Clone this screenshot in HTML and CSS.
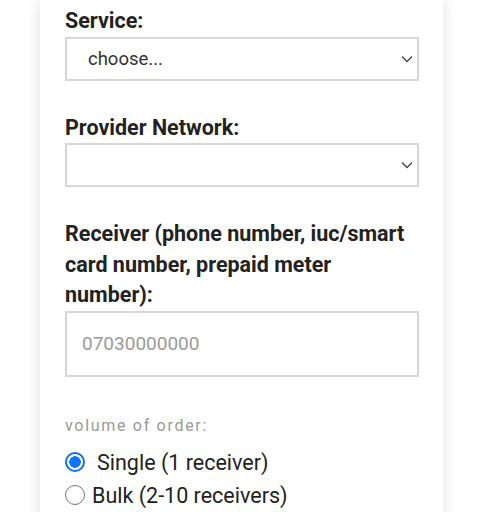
FILE: index.html
```html
<!DOCTYPE html>
<html>
<head>
<meta charset="utf-8">
<link rel="stylesheet" href="styles.css">
</head>
<body>
<div class="page">
  <form class="card">
    <div class="field">
      <label class="label">Service:</label>
      <div class="select-wrap">
        <div class="select">choose...</div>
        <svg class="chev" width="12" height="8" viewBox="0 0 12 8"><path d="M1 1.5 L6 6.5 L11 1.5" fill="none" stroke="#444" stroke-width="1.3"/></svg>
      </div>
    </div>
    <div class="field">
      <label class="label">Provider Network:</label>
      <div class="select-wrap">
        <div class="select"></div>
        <svg class="chev" width="12" height="8" viewBox="0 0 12 8"><path d="M1 1.5 L6 6.5 L11 1.5" fill="none" stroke="#444" stroke-width="1.3"/></svg>
      </div>
    </div>
    <div class="field">
      <label class="label">Receiver (phone number, iuc/smart card number, prepaid meter number):</label>
      <div class="input"><span class="ph">07030000000</span></div>
    </div>
    <div class="volume">volume of order:</div>
    <div class="radios">
      <div class="radio-row single"><span class="radio on"></span><span>Single (1 receiver)</span></div>
      <div class="radio-row bulk"><span class="radio"></span><span>Bulk (2-10 receivers)</span></div>
    </div>
  </form>
</div>
</body>
</html>
```
FILE: styles.css
```css
html, body {
  margin: 0;
  padding: 0;
  background: #ffffff;
}
body {
  font-family: Roboto, "Noto Sans", sans-serif;
  color: #222222;
  overflow: hidden;
}
.page {
  height: 512px;
  overflow: hidden;
}
.card {
  display: block;
  margin-left: 40px;
  width: 403px;
  box-sizing: border-box;
  min-height: 560px;
  background: #ffffff;
  box-shadow: 0 0 14px rgba(0, 0, 0, 0.13);
  padding: 6px 24px 0 25px;
}
.field {
  margin-bottom: 32px;
}
.label {
  display: block;
  font-size: 21.5px;
  font-weight: 700;
  line-height: 30.5px;
  color: #222222;
}
.select-wrap {
  position: relative;
}
.select {
  height: 44px;
  box-sizing: border-box;
  border: 2px solid #d6d6d6;
  padding-left: 21px;
  font-size: 18.5px;
  line-height: 40px;
  color: #333333;
}
.chev {
  position: absolute;
  right: 6px;
  top: 18px;
}
.input {
  height: 66px;
  box-sizing: border-box;
  border: 2px solid #d6d6d6;
  padding-left: 15px;
  font-size: 19px;
  line-height: 62px;
}
.ph {
  color: #9a9a9a;
}
.field:nth-child(3) {
  margin-bottom: 38px;
}
.volume {
  font-size: 16px;
  letter-spacing: 1.7px;
  color: #999999;
  line-height: 22px;
}
.radios {
  margin-top: 9px;
}
.radio-row {
  display: flex;
  align-items: center;
  height: 33px;
  font-size: 21.5px;
  color: #222222;
}
.radio {
  width: 18px;
  height: 18px;
  border: 1.5px solid #767676;
  border-radius: 50%;
  box-sizing: border-box;
  flex: none;
}
.radio.on {
  border: 2px solid #0b6ff0;
  background: radial-gradient(circle, #0b75ff 0 5.5px, #ffffff 6px);
  width: 20px;
  height: 20px;
}
.single .radio {
  margin-right: 12px;
}
.bulk .radio {
  width: 20px;
  height: 20px;
  margin-right: 7px;
}
```
